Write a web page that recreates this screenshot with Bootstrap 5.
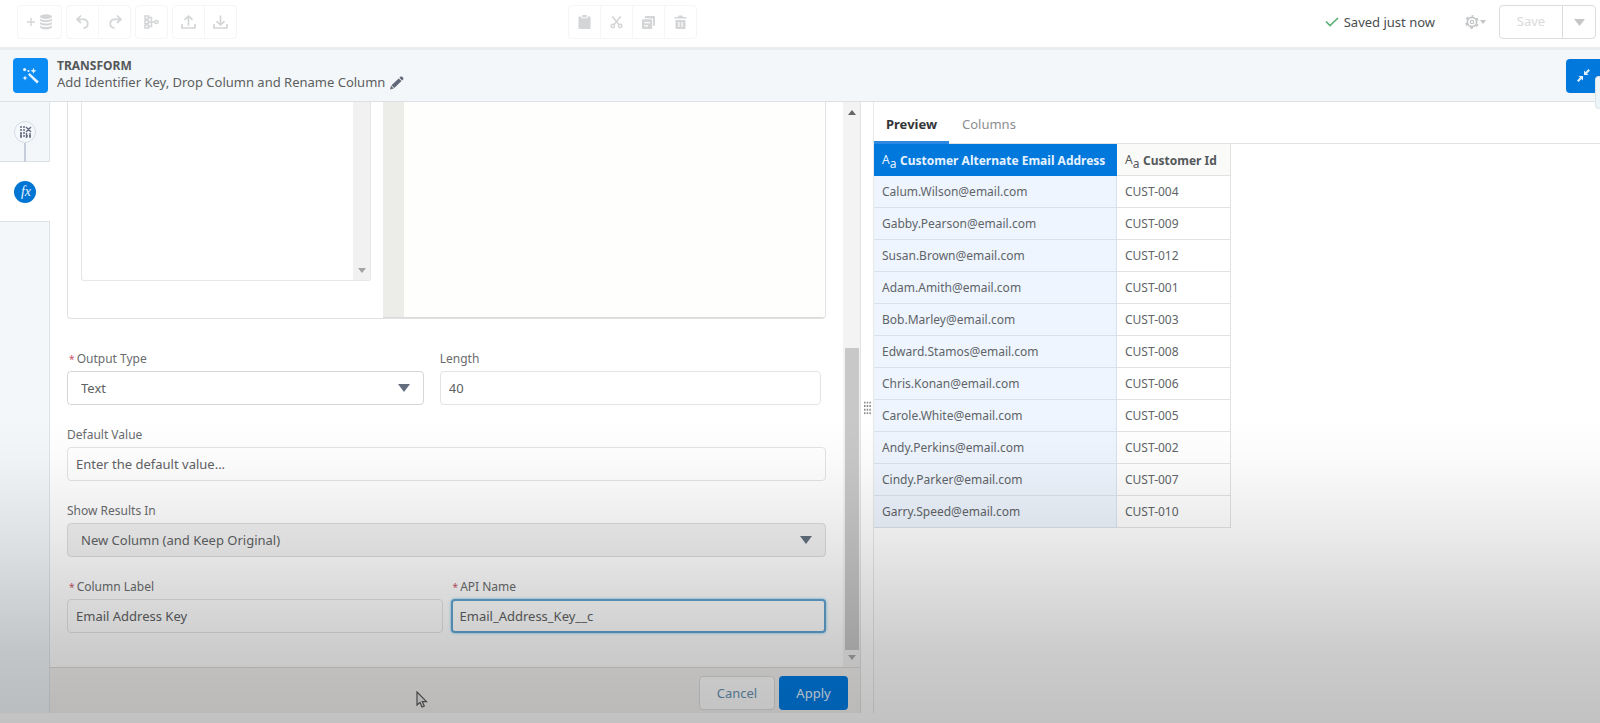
<!DOCTYPE html>
<html lang="en">
<head>
<meta charset="utf-8">
<meta name="viewport" content="width=device-width, initial-scale=1">
<title>Transform - Add Identifier Key, Drop Column and Rename Column</title>
<link href="https://cdn.jsdelivr.net/npm/bootstrap@5.3.0/dist/css/bootstrap.min.css" rel="stylesheet">
<style>
  body { font-family: "Noto Sans", "Open Sans", sans-serif; font-size: 13px; line-height: 20px; color: #5c5e60; background: #fff; }
  .app-shell { height: 100vh; min-height: 640px; padding-bottom: 10px; }
  .shade { inset: 0; pointer-events: none; z-index: 20;
    background: linear-gradient(to bottom, rgba(0,0,0,0) 58%, rgba(0,0,0,.02) 64%, rgba(0,0,0,.05) 69%, rgba(0,0,0,.09) 75%, rgba(0,0,0,.15) 83%, rgba(0,0,0,.2) 90%, rgba(0,0,0,.24) 100%); }

  /* toolbar */
  .toolbar { display: grid; grid-template-columns: 38fr auto 62fr; height: 50px; padding: 5px 4px 8px 17px; border-bottom: 3px solid #ebecef; }
  .toolbar .btn { height: 34px; width: 33px; padding: 0; border: 1px solid #f5f5f5; border-radius: 4px; color: #d3d5d7; background: #fff; opacity: 1; display: flex; align-items: center; justify-content: center; }
  .toolbar .btn.btn-wide { width: 45px; gap: 4px; }
  .toolbar .btn.btn-save { width: 64px; border-color: #dddcdc; font-size: 13px; color: #dadada; }
  .toolbar .btn.btn-more { width: 34px; border-color: #dddcdc; }
  .toolbar .btn.btn-gear { width: 24px; margin-right: 12px; border: 0; gap: 1px; }
  .saved-note { margin-right: 28px; gap: 5px; font-size: 13px; color: #4b4d4e; }

  /* node header */
  .node-head { height: 52px; padding-left: 13px; background: #f3f7f9; border-bottom: 1px solid #dde1e5; }
  .node-icon { width: 35px; height: 35px; border-radius: 4px; background: #0b8cf5; }
  .node-text { padding: 0 0 2px 9px; }
  .node-kind { font-size: 12px; line-height: 16px; color: #55585a; }
  .node-title { font-size: 13px; line-height: 17px; color: #5c5e60; }
  .node-head .btn-collapse { width: 34px; height: 34px; padding: 0; border: 0; border-radius: 4px 0 0 4px; background: #0078dc; }
  .edge-tab { right: 0; top: 26px; width: 5px; height: 33px; border: 1px solid #dde4e8; border-right: 0; border-radius: 4px 0 0 4px; background: #eef5f9; }

  /* step rail */
  .rail { width: 50px; background: #f3f7f9; border-right: 1px solid #dfe3e8; }
  .rail .step { height: 60px; width: 50px; border-bottom: 1px solid #dde1e5; }
  .rail .step.active { background: #fff; }
  .rail .step button { background: none; border: 0; padding: 0; width: 50px; height: 60px; display: block; }
  .rail .step svg { display: block; }

  /* form panel */
  .form-panel { flex: 0 0 calc(54% - 53px); min-width: 0; border-right: 1px solid #e2e2e2; margin-right: 12px; }
  .form-body { padding: 0 17px 34px; min-width: 0; }
  .editor { border: 1px solid #e2e2e2; border-top: 0; border-radius: 0 0 4px 4px; min-height: 80px; margin-bottom: 30px; overflow: hidden; }
  .fn-side { width: 315px; padding: 0 12px 37px 13px; }
  .fn-list { border: 1px solid #e6e6e6; border-top: 0; border-radius: 0 0 3px 3px; }
  .fn-track { width: 17px; background: #f1f1f1; padding-bottom: 7px; }
  .gutter { width: 21px; background: #ecece9; border-bottom: 1px solid #dadada; }
  .code-area { background: #fefefc; border: 0; border-bottom: 1px solid #dadada; resize: none; outline: 0; min-width: 0; }
  .form-body label { line-height: 20px; margin-bottom: 2px; display: block; color: #6a6c6e; font-size: 12px; }
  .req { color: #c9556a; font-size: 10px; padding-left: 2px; margin-right: -1px; }
  .form-body .form-control, .form-body .form-select { height: 34px; font-size: 13px; line-height: 20px; padding: 6px 8px; border: 1px solid #e4e4e4; border-radius: 4px; color: #606264; background-color: #fff; box-shadow: none; }
  .form-body .form-control::placeholder { color: #606264; opacity: 1; }
  .form-body .form-select { padding-left: 13px; border-color: #d6d6d6; background-size: 12px 8px; background-position: right 13px center; background-image: url("data:image/svg+xml,%3Csvg xmlns='http://www.w3.org/2000/svg' viewBox='0 0 12 8'%3E%3Cpath d='M0 0h12L6 8z' fill='%23636f7e'/%3E%3C/svg%3E"); }
  .form-body .form-select:disabled { background-color: #f2f2f2; opacity: 1; border-color: #dcdcdc; }
  .form-body .form-control.field-active { border: 2px solid #62a5d2; box-shadow: 0 0 3px #6fc0ee; padding: 5px 7px; }
  .field-row { margin-bottom: 20px; }
  .type-col { flex: 0 0 47%; }
  .len-col { flex: 1; margin-right: 5px; }

  .scroll-track { width: 17px; background: #f3f3f3; padding: 8px 1px 7px 2px; }
  .thumb { height: 55%; background: #c8c8c8; margin-bottom: 5px; }
  .scroll-track svg { display: block; margin: 0 auto; }
  .form-foot { height: 46px; padding: 4px 12px 0 0; background: #f3f2f0; border-top: 1px solid #dddbda; }
  .form-foot .btn { height: 34px; font-size: 13px; line-height: 20px; padding: 0; border-radius: 4px; }
  .form-foot .btn-cancel { width: 76px; background: #fff; border: 1px solid #dedede; color: #6693b5; }
  .form-foot .btn-apply { width: 69px; background: #007de6; border: 0; color: #e6f3ff; }
  .pointer { left: 366px; top: 23px; }

  /* preview */
  .splitter { left: -10px; top: 50%; transform: translateY(-50%); }
  .preview { border-left: 1px solid #e8e8e8; min-width: 0; }
  .preview .nav-tabs { height: 42px; border-bottom: 1px solid #e2e2e2; }
  .preview .nav-link { border: 0; border-radius: 0; padding: 12px 13px 6px; height: 42px; font-size: 13px; color: #8c8e8f; background: none; }
  .preview .nav-link.active { color: #333537; font-weight: 700; border-bottom: 3px solid #2d88e2; background: none; padding: 12px 12px 6px; width: 75px; text-align: center; }
  .data-grid { width: 357px; border-collapse: separate; border-spacing: 0; margin: 0; table-layout: fixed; }
  .data-grid col.c1 { width: 243px; }
  .data-grid th, .data-grid td { height: 32px; padding: 0 8px; border-right: 1px solid #e0e2e4; border-bottom: 1px solid #e0e2e4; vertical-align: middle; white-space: nowrap; font-size: 12px; line-height: 20px; }
  .data-grid td { color: #606468; }
  .data-grid td:first-child { background: #eef5fe; border-color: #d9e2ec; }
  .data-grid th { color: #55585a; background: #fafaf9; padding-top: 2px; }
  .data-grid th:first-child { background: #0078dc; color: #e6f3ff; border-color: #0078dc; }
  .type-mark { display: inline-block; width: 18px; font-weight: 400; line-height: 12px; }
  .type-mark sup, .type-mark sub { font-size: 12px; line-height: 12px; }
  .type-mark sup { top: -1px; }
  .type-mark sub { bottom: -3px; }
</style>
</head>
<body>
<div class="app-shell d-flex flex-column position-relative overflow-hidden">

  <header class="toolbar">
    <div class="d-flex gap-1">
      <button class="btn btn-wide" type="button" aria-label="Add data" disabled>
        <svg width="8" height="8" viewBox="0 0 8 8" stroke="currentColor" stroke-width="1.4"><path d="M4 0v8M0 4h8"/></svg>
        <svg width="14" height="16" viewBox="0 0 14 16" fill="currentColor"><ellipse cx="7" cy="2.6" rx="6" ry="2.4"/><path d="M1 4.5c2 2 10 2 12 0v2c-2 2-10 2-12 0zM1 8c2 2 10 2 12 0v2c-2 2-10 2-12 0zM1 11.500c2 2 10 2 12 0V13.600c-2 2.600-10 2.600-12 0z"/></svg>
      </button>
      <div class="btn-group">
        <button class="btn" type="button" aria-label="Undo" disabled><svg width="14" height="14" viewBox="0 0 14 14" fill="none" stroke="currentColor" stroke-width="1.700" stroke-linecap="round" stroke-linejoin="round"><path d="M4.500 1 1 4.300 4.500 7.500M1.500 4.300H8a4.400 4.400 0 0 1 0 8.700"/></svg></button>
        <button class="btn" type="button" aria-label="Redo" disabled><svg width="14" height="14" viewBox="0 0 14 14" fill="none" stroke="currentColor" stroke-width="1.700" stroke-linecap="round" stroke-linejoin="round"><path d="M9.500 1 13 4.300 9.500 7.500M12.500 4.300H6a4.400 4.400 0 0 0 0 8.700"/></svg></button>
      </div>
      <button class="btn" type="button" aria-label="Align nodes" disabled><svg width="15" height="14" viewBox="0 0 15 14" fill="none" stroke="currentColor" stroke-width="1.500"><rect x="1" y="1" width="3.500" height="3"/><rect x="1" y="5.500" width="3.500" height="3"/><rect x="1" y="10" width="3.500" height="3"/><path d="M4.500 2.500h3v9h-3M4.500 7H11"/><circle cx="12.500" cy="7" r="1.600"/></svg></button>
      <div class="btn-group">
        <button class="btn" type="button" aria-label="Upload" disabled><svg width="15" height="15" viewBox="0 0 15 15" fill="none" stroke="currentColor" stroke-width="1.700" stroke-linecap="round" stroke-linejoin="round"><path d="M7.500 10V1M4 4.300 7.500 1 11 4.300M1 9.500V13h13V9.500"/></svg></button>
        <button class="btn" type="button" aria-label="Download" disabled><svg width="15" height="15" viewBox="0 0 15 15" fill="none" stroke="currentColor" stroke-width="1.700" stroke-linecap="round" stroke-linejoin="round"><path d="M7.500 1v9M4 6.700 7.500 10 11 6.700M1 9.500V13h13V9.500"/></svg></button>
      </div>
    </div>
    <div class="btn-group align-self-start">
      <button class="btn" type="button" aria-label="Paste" disabled><svg width="13" height="14" viewBox="0 0 14 15" fill="currentColor"><path d="M4.500 0h5v2.500h-5z"/><path d="M1.500 1.500h2v2h7v-2h2c.6 0 1 .4 1 1V14c0 .6-.4 1-1 1h-11c-.6 0-1-.4-1-1V2.500c0-.6.4-1 1-1z"/></svg></button>
      <button class="btn" type="button" aria-label="Cut" disabled><svg width="13" height="14" viewBox="0 0 14 14" fill="none" stroke="currentColor" stroke-width="1.700"><path d="m2.500 1 7.300 9M11.500 1 4.200 10"/><circle cx="3" cy="11.300" r="1.800"/><circle cx="11" cy="11.300" r="1.800"/></svg></button>
      <button class="btn" type="button" aria-label="Copy" disabled><svg width="13" height="13" viewBox="0 0 14 14" fill="currentColor"><path d="M4 0h9c.6 0 1 .4 1 1v8.500c0 .6-.4 1-1 1h-1V2.800L4 2.500 3 2.300V1c0-.6.4-1 1-1z"/><path fill-rule="evenodd" d="M1 3.500h9c.6 0 1 .4 1 1V13c0 .6-.4 1-1 1H1c-.6 0-1-.4-1-1V4.500c0-.6.400-1 1-1zM2.500 6.500v1.200h6V6.500zM2.500 10v1.200h4V10z"/></svg></button>
      <button class="btn" type="button" aria-label="Delete" disabled><svg width="13" height="14" viewBox="0 0 13 14" fill="currentColor"><path d="M.5 2h3.500L4.700.5h3.600L9 2h3.500v1.600H.5z"/><path fill-rule="evenodd" d="M1.500 5h10v8c0 .6-.4 1-1 1h-8c-.6 0-1-.4-1-1zM4.300 7v5h1.200V7zM7.500 7v5h1.200V7z"/></svg></button>
    </div>
    <div class="d-flex align-items-start justify-content-end">
      <span class="saved-note d-flex align-items-center h-100">
        <svg width="14" height="10" viewBox="0 0 14 10" fill="none" stroke="#5bb174" stroke-width="1.700"><path d="m1 4.500 4 4L13 1"/></svg>
        Saved just now</span>
      <button class="btn btn-gear" type="button" aria-label="Settings" disabled>
        <svg width="14" height="14" viewBox="0 0 14 14" fill="none" stroke="#c2c4c6"><circle cx="7" cy="7" r="4.600" stroke-width="1.600"/><circle cx="7" cy="7" r="1.700" stroke-width="1.200"/><circle cx="7" cy="7" r="6" stroke-width="1.700" stroke-dasharray="2.800 3.483" stroke-dashoffset="1.400" transform="rotate(-90 7 7)"/></svg>
        <svg width="6" height="4" viewBox="0 0 6 4" fill="#c2c4c6"><path d="M0 0h6L3 4z"/></svg>
      </button>
      <div class="btn-group">
        <button class="btn btn-save" type="button" disabled>Save</button>
        <button class="btn btn-more" type="button" aria-label="More save options" disabled><svg width="11" height="7" viewBox="0 0 11 7" fill="#c6c6c6"><path d="M0 0h11L5.500 7z"/></svg></button>
      </div>
    </div>
  </header>

  <section class="node-head d-flex align-items-center position-relative">
    <span class="node-icon d-flex align-items-center justify-content-center">
      <svg width="18" height="18" viewBox="0 0 18 18" fill="#e4f3ff"><path d="m7.600 6 9.200 8.600-1.900 2L6 7.700z"/><path d="m11.500.8.9 2.100 2.100.9-2.100.9-.9 2.100-.9-2.100-2.100-.9 2.100-.9zM3 8.500l.8 1.700 1.700.8-1.700.8L3 13.500l-.8-1.700L.5 11l1.700-.8z"/><circle cx="2.600" cy="2.600" r="1.600"/><circle cx="6.400" cy="4" r="1.100"/></svg>
    </span>
    <div class="node-text">
      <div class="node-kind fw-bold">TRANSFORM</div>
      <div class="node-title d-flex align-items-center gap-1">Add Identifier Key, Drop Column and Rename Column
        <button class="btn p-0 border-0 d-flex" type="button" aria-label="Edit label"><svg width="15" height="14" viewBox="0 0 15 14" fill="#62677a"><path d="M1 13.500 2 9.800l2.800 2.700zM2.500 9.300 9.700 2.400l2.800 2.700-7.200 6.900zM10.400 1.800l1-1c.5-.5 1.200-.5 1.700 0l1 1c.5.500.5 1.200 0 1.700l-1 1z"/></svg></button>
      </div>
    </div>
    <button class="btn btn-collapse ms-auto d-flex align-items-center justify-content-center" type="button" aria-label="Collapse panel"><svg width="13" height="13" viewBox="0 0 13 13" fill="#dff0ff"><path d="M7 1.500v4.500h4.500L10 4.500l3-3L11.500 0l-3 3zM6 11.500V7H1.500L3 8.500l-3 3L1.500 13l3-3z"/></svg></button>
    <span class="edge-tab position-absolute"></span>
  </section>

  <main class="d-flex flex-grow-1" style="min-height:0">
    <nav class="rail flex-shrink-0" aria-label="Transform steps">
      <div class="step"><button type="button" aria-label="Drop columns step">
        <svg width="50" height="59" viewBox="0 0 50 59" fill="none"><path d="M25 40v19" stroke="#c8cddb" stroke-width="2"/><circle cx="25" cy="29" r="10.500" fill="#f5f8fb" stroke="#d9dce8"/><path d="M20 24h5M20 27h5M20 30h5M20 33h11" stroke="#666b80" stroke-width="1.700" stroke-dasharray="2 1"/><path d="m26 24 5 5M31 24l-5 5M26.500 30v5M30 30v5M21 30v5" stroke="#666b80" stroke-width="1.400"/></svg>
      </button></div>
      <div class="step active"><button type="button" aria-label="Formula step">
        <svg width="50" height="59" viewBox="0 0 50 59"><circle cx="25" cy="29" r="11" fill="#0075d4"/><text x="26" y="33" text-anchor="middle" font-family="Liberation Serif, serif" font-style="italic" font-size="14" fill="#e6f3ff">fx</text></svg>
      </button></div>
    </nav>

    <section class="form-panel d-flex flex-column">
      <div class="d-flex flex-grow-1" style="min-height:0">
        <form class="form-body d-flex flex-column flex-grow-1">
          <div class="editor d-flex flex-grow-1">
            <div class="fn-side d-flex flex-shrink-0"><div class="fn-list d-flex flex-grow-1 justify-content-end">
              <div class="fn-track d-flex align-items-end justify-content-center"><svg width="8" height="5" viewBox="0 0 8 5" fill="#a3a3a3"><path d="M0 0h8L4 5z"/></svg></div>
            </div></div>
            <div class="gutter flex-shrink-0"></div>
            <textarea class="code-area flex-grow-1" aria-label="Formula"></textarea>
          </div>
          <div class="field-row d-flex gap-3">
            <div class="type-col"><label for="outType"><span class="req">*</span> Output Type</label>
              <select class="form-select" id="outType"><option>Text</option></select></div>
            <div class="len-col"><label for="len">Length</label>
              <input class="form-control" id="len" type="text" value="40"></div>
          </div>
          <div class="field-row"><label for="defVal">Default Value</label>
            <input class="form-control" id="defVal" type="text" placeholder="Enter the default value..."></div>
          <div class="field-row"><label for="showIn">Show Results In</label>
            <select class="form-select" id="showIn" disabled><option>New Column (and Keep Original)</option></select></div>
          <div class="d-flex gap-2">
            <div class="flex-fill"><label for="colLabel"><span class="req">*</span> Column Label</label>
              <input class="form-control" id="colLabel" type="text" value="Email Address Key"></div>
            <div class="flex-fill"><label for="apiName"><span class="req">*</span> API Name</label>
              <input class="form-control field-active" id="apiName" type="text" value="Email_Address_Key__c"></div>
          </div>
        </form>
        <div class="scroll-track d-flex flex-column flex-shrink-0">
          <svg width="8" height="5" viewBox="0 0 8 5" fill="#666"><path d="M0 5h8L4 0z"/></svg>
          <div class="thumb mt-auto"></div>
          <svg width="8" height="5" viewBox="0 0 8 5" fill="#aaa"><path d="M0 0h8L4 5z"/></svg>
        </div>
      </div>
      <footer class="form-foot d-flex align-items-center justify-content-end gap-1 position-relative">
        <button class="btn btn-cancel" type="button">Cancel</button>
        <button class="btn btn-apply" type="button">Apply</button>
        <svg class="pointer position-absolute" width="12" height="17" viewBox="0 0 12 17"><path d="M1 1v13l3-2.500 2 4.500 2.300-1-2-4.300h4.200z" fill="#e9e9e9" stroke="#5a5a5a" stroke-width="1.200"/></svg>
      </footer>
    </section>

    <section class="preview flex-grow-1 position-relative">
      <svg class="splitter position-absolute" width="7" height="13" viewBox="0 0 7 13" fill="#8a8a8a"><path d="M0 0h1.500v2H0zM2.700 0h1.500v2H2.700zM5.400 0h1.500v2H5.400zM0 3.600h1.500v2H0zM2.700 3.600h1.500v2H2.700zM5.400 3.600h1.500v2H5.400zM0 7.200h1.500v2H0zM2.700 7.200h1.500v2H2.700zM5.400 7.200h1.500v2H5.400zM0 10.800h1.500v2H0zM2.700 10.800h1.500v2H2.700zM5.400 10.800h1.500v2H5.400z"/></svg>
      <div class="nav nav-tabs">
        <a class="nav-link active" href="#preview" aria-current="page">Preview</a>
        <a class="nav-link" href="#columns">Columns</a>
      </div>
      <table class="data-grid" id="preview">
        <colgroup><col class="c1"><col></colgroup>
        <thead><tr>
          <th scope="col"><span class="type-mark"><sup>A</sup><sub>a</sub></span>Customer Alternate Email Address</th>
          <th scope="col"><span class="type-mark"><sup>A</sup><sub>a</sub></span>Customer Id</th>
        </tr></thead>
        <tbody>
          <tr><td>Calum.Wilson@email.com</td><td>CUST-004</td></tr>
          <tr><td>Gabby.Pearson@email.com</td><td>CUST-009</td></tr>
          <tr><td>Susan.Brown@email.com</td><td>CUST-012</td></tr>
          <tr><td>Adam.Amith@email.com</td><td>CUST-001</td></tr>
          <tr><td>Bob.Marley@email.com</td><td>CUST-003</td></tr>
          <tr><td>Edward.Stamos@email.com</td><td>CUST-008</td></tr>
          <tr><td>Chris.Konan@email.com</td><td>CUST-006</td></tr>
          <tr><td>Carole.White@email.com</td><td>CUST-005</td></tr>
          <tr><td>Andy.Perkins@email.com</td><td>CUST-002</td></tr>
          <tr><td>Cindy.Parker@email.com</td><td>CUST-007</td></tr>
          <tr><td>Garry.Speed@email.com</td><td>CUST-010</td></tr>
        </tbody>
      </table>
    </section>
  </main>
  <div class="shade position-absolute"></div>
</div>
<script src="https://cdn.jsdelivr.net/npm/bootstrap@5.3.0/dist/js/bootstrap.bundle.min.js"></script>
</body>
</html>
